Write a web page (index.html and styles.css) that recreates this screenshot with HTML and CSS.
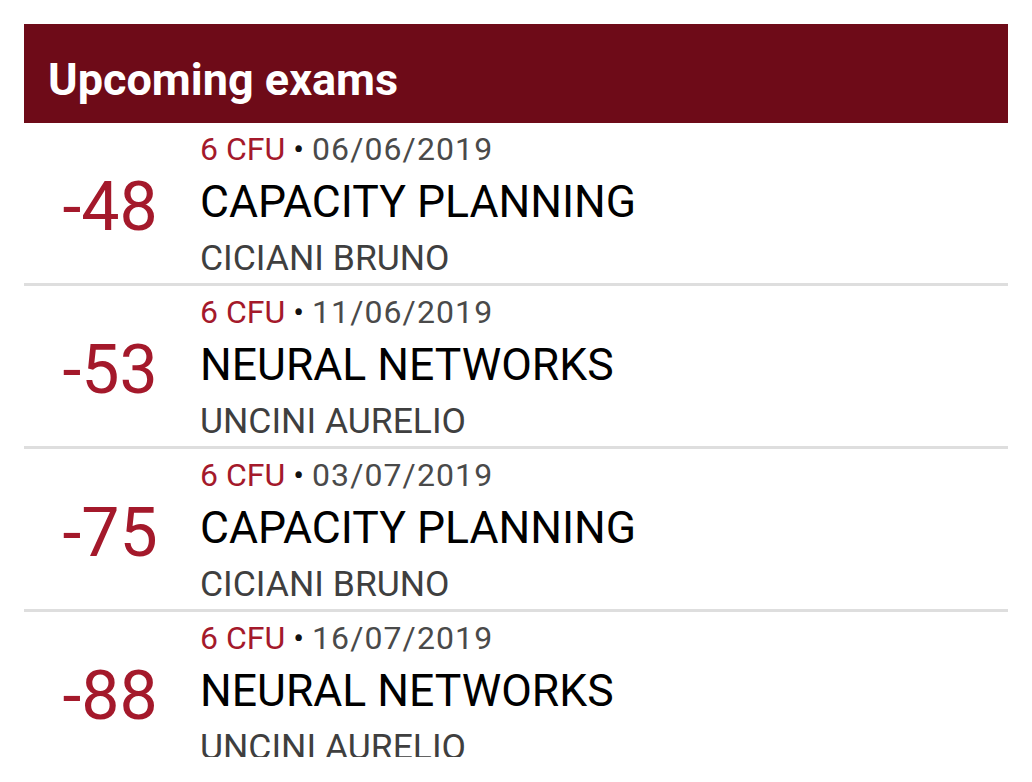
FILE: index.html
```html
<!DOCTYPE html>
<html>
<head>
<meta charset="utf-8">
<link rel="stylesheet" href="styles.css">
</head>
<body>
<div class="card">
  <div class="header"><h1 class="title">Upcoming exams</h1></div>
  <div class="list">
    <div class="row">
      <div class="days">-48</div>
      <div class="info">
        <div class="meta"><span class="cfu">6 CFU</span><span class="dot">•</span><span class="date">06/06/2019</span></div>
        <div class="name">CAPACITY PLANNING</div>
        <div class="prof">CICIANI BRUNO</div>
      </div>
    </div>
    <div class="row">
      <div class="days">-53</div>
      <div class="info">
        <div class="meta"><span class="cfu">6 CFU</span><span class="dot">•</span><span class="date">11/06/2019</span></div>
        <div class="name">NEURAL NETWORKS</div>
        <div class="prof">UNCINI AURELIO</div>
      </div>
    </div>
    <div class="row">
      <div class="days">-75</div>
      <div class="info">
        <div class="meta"><span class="cfu">6 CFU</span><span class="dot">•</span><span class="date">03/07/2019</span></div>
        <div class="name">CAPACITY PLANNING</div>
        <div class="prof">CICIANI BRUNO</div>
      </div>
    </div>
    <div class="row">
      <div class="days">-88</div>
      <div class="info">
        <div class="meta"><span class="cfu">6 CFU</span><span class="dot">•</span><span class="date">16/07/2019</span></div>
        <div class="name">NEURAL NETWORKS</div>
        <div class="prof">UNCINI AURELIO</div>
      </div>
    </div>
  </div>
</div>
</body>
</html>
```

FILE: styles.css
```css
html, body {
  margin: 0;
  padding: 0;
  background: #ffffff;
}
body {
  padding: 24px;
  font-family: Roboto, "Noto Sans", sans-serif;
}
.card {
  height: 733px;
  overflow: hidden;
}
.header {
  background: #6e0b18;
  height: 99px;
  box-sizing: border-box;
  padding: 31px 0 0 24px;
}
.title {
  margin: 0;
  color: #ffffff;
  font-size: 45px;
  font-weight: 700;
  line-height: 50px;
}
.row {
  display: flex;
  height: 160px;
  border-bottom: 3px solid #dedede;
}
.days {
  width: 172px;
  flex: none;
  text-align: center;
  color: #a4192b;
  font-size: 68px;
  line-height: 80px;
  padding-top: 44px;
}
.info {
  padding-top: 5px;
  padding-left: 4px;
}
.meta {
  font-size: 32px;
  line-height: 43px;
  color: #4a4a4a;
}
.cfu {
  color: #a4192b;
}
.dot {
  color: #111111;
  font-size: 32px;
  margin: 0 8px 0 8px;
}
.date {
  letter-spacing: 1.1px;
}
.name {
  font-size: 44.5px;
  line-height: 63px;
  color: #000000;
}
.prof {
  font-size: 35.5px;
  line-height: 48px;
  color: #3f3f3f;
}
```
